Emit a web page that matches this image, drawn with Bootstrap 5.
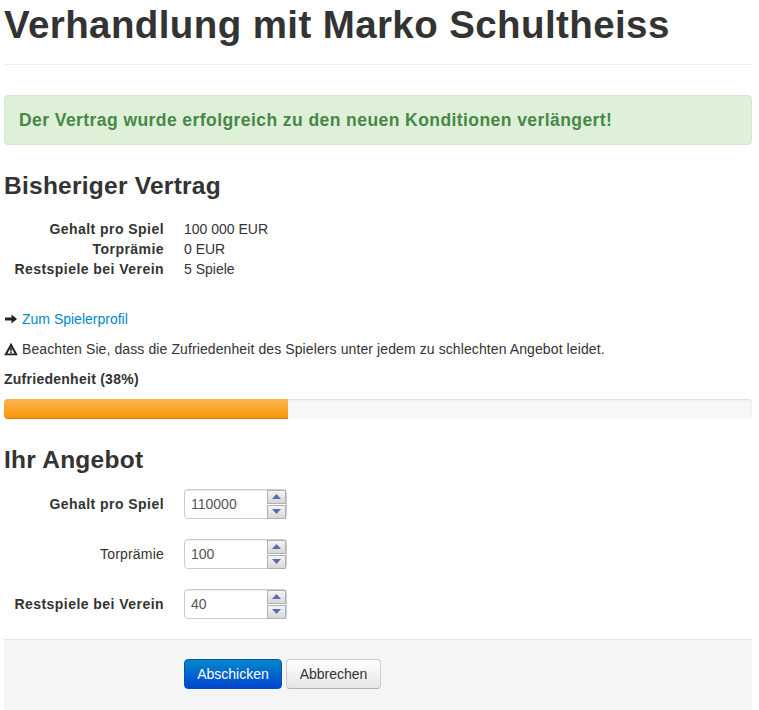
<!DOCTYPE html>
<html lang="de">
<head>
    <meta charset="UTF-8">
    <meta name="viewport" content="width=device-width, initial-scale=1.0">
    <title>Verhandlung mit Marko Schultheiss</title>
    <link href="https://cdn.jsdelivr.net/npm/bootstrap@5.3.0/dist/css/bootstrap.min.css" rel="stylesheet">
    <style>
        body {
            font-family: "Liberation Sans", Arial, sans-serif;
            font-size: 14px;
            line-height: 20px;
            color: #333;
            background: #fff;
            overflow: hidden;
        }

        .page-wrap {
            padding: 0 7px 0 4px;
        }

        .page-head {
            height: 65px;
            border-bottom: 1px solid #eee;
            margin-bottom: 30px;
        }

        .page-head h1 {
            font-size: 38.5px;
            line-height: 50px;
            font-weight: 700;
            letter-spacing: 0.4px;
            margin: 0;
            color: #333;
        }

        .done-alert {
            height: 50px;
            padding: 0 14px;
            margin: 0 0 21px;
            display: flex;
            align-items: center;
            background: #dff0d8;
            border: 1px solid #d6e9c6;
            border-radius: 4px;
            color: #468847;
            font-size: 17.5px;
            font-weight: 700;
            letter-spacing: 0.43px;
        }

        .sect-title {
            font-size: 24.5px;
            line-height: 40px;
            font-weight: 700;
            letter-spacing: 0.25px;
            margin: 0;
            color: #333;
        }

        .offer-title {
            margin-bottom: 9px;
        }

        .terms {
            margin: 13px 0 30px;
        }

        .terms-row {
            display: flex;
            height: 20px;
        }

        .terms-row dt {
            width: 160px;
            text-align: right;
            font-weight: 700;
            letter-spacing: 0.45px;
        }

        .terms-row dd {
            margin: 0 0 0 20px;
        }

        .info-line {
            display: flex;
            align-items: center;
            gap: 4px;
            height: 20px;
            margin-bottom: 10px;
        }

        .info-line a {
            color: #0088cc;
            text-decoration: none;
        }

        .info-line span {
            letter-spacing: 0.1px;
        }

        .mood-label {
            font-weight: 700;
            letter-spacing: 0.26px;
            height: 20px;
            margin-bottom: 10px;
        }

        .mood-bar {
            height: 20px;
            margin-bottom: 21px;
            border-radius: 4px;
            background: linear-gradient(to bottom, #f5f5f5, #f9f9f9);
            box-shadow: inset 0 1px 2px rgba(0, 0, 0, 0.1);
            overflow: hidden;
        }

        .mood-fill {
            height: 100%;
            background: linear-gradient(to bottom, #fbb450, #f89406);
            box-shadow: inset 0 -1px 0 rgba(0, 0, 0, 0.15);
        }

        .offer-row {
            display: flex;
            align-items: center;
            height: 30px;
            margin-bottom: 20px;
        }

        .offer-row label {
            width: 160px;
            text-align: right;
            letter-spacing: 0.2px;
            margin: 0;
        }

        .offer-row label.is-bold {
            font-weight: 700;
            letter-spacing: 0.45px;
        }

        .spin-box {
            display: flex;
            align-items: center;
            width: 103px;
            height: 30px;
            margin-left: 20px;
            background: #fff;
            border: 1px solid #ccc;
            border-radius: 4px;
            box-shadow: inset 0 1px 1px rgba(0, 0, 0, 0.075);
        }

        .spin-box input {
            flex: 1;
            min-width: 0;
            border: 0;
            outline: 0;
            background: transparent;
            padding: 0 0 0 6px;
            color: #555;
            font: 14px "Liberation Sans", Arial, sans-serif;
        }

        .spin-col {
            display: flex;
            flex-direction: column;
            gap: 1px;
            width: 19px;
        }

        .spin-btn {
            display: flex;
            align-items: center;
            justify-content: center;
            height: 14px;
            border: 1px solid #b0b0b8;
            background: linear-gradient(to bottom, #f4f4f4, #d8d8d8);
        }

        .form-foot {
            height: 71px;
            margin-top: 5px;
            padding: 19px 0 0 180px;
            background: #f5f5f5;
            border-top: 1px solid #e5e5e5;
            display: flex;
            align-items: flex-start;
            gap: 4px;
        }

        .btn-send, .btn-stop {
            height: 30px;
            font-size: 14px;
            line-height: 28px;
            border-radius: 4px;
        }

        .btn-send {
            width: 98px;
            color: #fff;
            border: 1px solid #0055b3;
            background: linear-gradient(to bottom, #0088cc, #0044cc);
        }

        .btn-stop {
            width: 95px;
            color: #333;
            border: 1px solid #ccc;
            border-bottom-color: #b3b3b3;
            background: linear-gradient(to bottom, #fff, #e6e6e6);
        }
    </style>
</head>
<body>
    <div class="page-wrap">
        <div class="page-head">
            <h1>Verhandlung mit Marko Schultheiss</h1>
        </div>

        <div class="done-alert">Der Vertrag wurde erfolgreich zu den neuen Konditionen verlängert!</div>

        <h2 class="sect-title">Bisheriger Vertrag</h2>
        <dl class="terms">
            <div class="terms-row"><dt>Gehalt pro Spiel</dt><dd>100 000 EUR</dd></div>
            <div class="terms-row"><dt>Torprämie</dt><dd>0 EUR</dd></div>
            <div class="terms-row"><dt>Restspiele bei Verein</dt><dd>5 Spiele</dd></div>
        </dl>

        <div class="info-line">
            <svg width="14" height="14" viewBox="0 0 14 14"><path d="M1 5.5h6.5V2.5l5.5 4.5-5.5 4.5V8.5H1z" fill="#222"/></svg>
            <a href="#">Zum Spielerprofil</a>
        </div>
        <div class="info-line">
            <svg width="14" height="14" viewBox="0 0 14 14"><path fill-rule="evenodd" d="M7 .8l6.8 12.4H.2zM7 5L3.4 11.5h7.2zM6.2 6h1.6v3H6.2zM6.2 9.6h1.6v1.4H6.2z" fill="#222"/></svg>
            <span>Beachten Sie, dass die Zufriedenheit des Spielers unter jedem zu schlechten Angebot leidet.</span>
        </div>
        <div class="mood-label">Zufriedenheit (38%)</div>
        <div class="mood-bar"><div class="mood-fill" style="width: 38%"></div></div>

        <h2 class="sect-title offer-title">Ihr Angebot</h2>
        <form onsubmit="return false">
            <div class="offer-row">
                <label class="is-bold">Gehalt pro Spiel</label>
                <div class="spin-box">
                    <input type="text" value="110000">
                    <div class="spin-col">
                        <span class="spin-btn"><svg width="9" height="5"><path d="M4.5 0L9 5H0z" fill="#5a6bb0"/></svg></span>
                        <span class="spin-btn"><svg width="9" height="5"><path d="M0 0h9L4.5 5z" fill="#5a6bb0"/></svg></span>
                    </div>
                </div>
            </div>
            <div class="offer-row">
                <label>Torprämie</label>
                <div class="spin-box">
                    <input type="text" value="100">
                    <div class="spin-col">
                        <span class="spin-btn"><svg width="9" height="5"><path d="M4.5 0L9 5H0z" fill="#5a6bb0"/></svg></span>
                        <span class="spin-btn"><svg width="9" height="5"><path d="M0 0h9L4.5 5z" fill="#5a6bb0"/></svg></span>
                    </div>
                </div>
            </div>
            <div class="offer-row">
                <label class="is-bold">Restspiele bei Verein</label>
                <div class="spin-box">
                    <input type="text" value="40">
                    <div class="spin-col">
                        <span class="spin-btn"><svg width="9" height="5"><path d="M4.5 0L9 5H0z" fill="#5a6bb0"/></svg></span>
                        <span class="spin-btn"><svg width="9" height="5"><path d="M0 0h9L4.5 5z" fill="#5a6bb0"/></svg></span>
                    </div>
                </div>
            </div>
            <div class="form-foot">
                <button type="submit" class="btn btn-send p-0">Abschicken</button>
                <button type="button" class="btn btn-stop p-0">Abbrechen</button>
            </div>
        </form>
    </div>

    <script src="https://cdn.jsdelivr.net/npm/bootstrap@5.3.0/dist/js/bootstrap.bundle.min.js"></script>
</body>
</html>
